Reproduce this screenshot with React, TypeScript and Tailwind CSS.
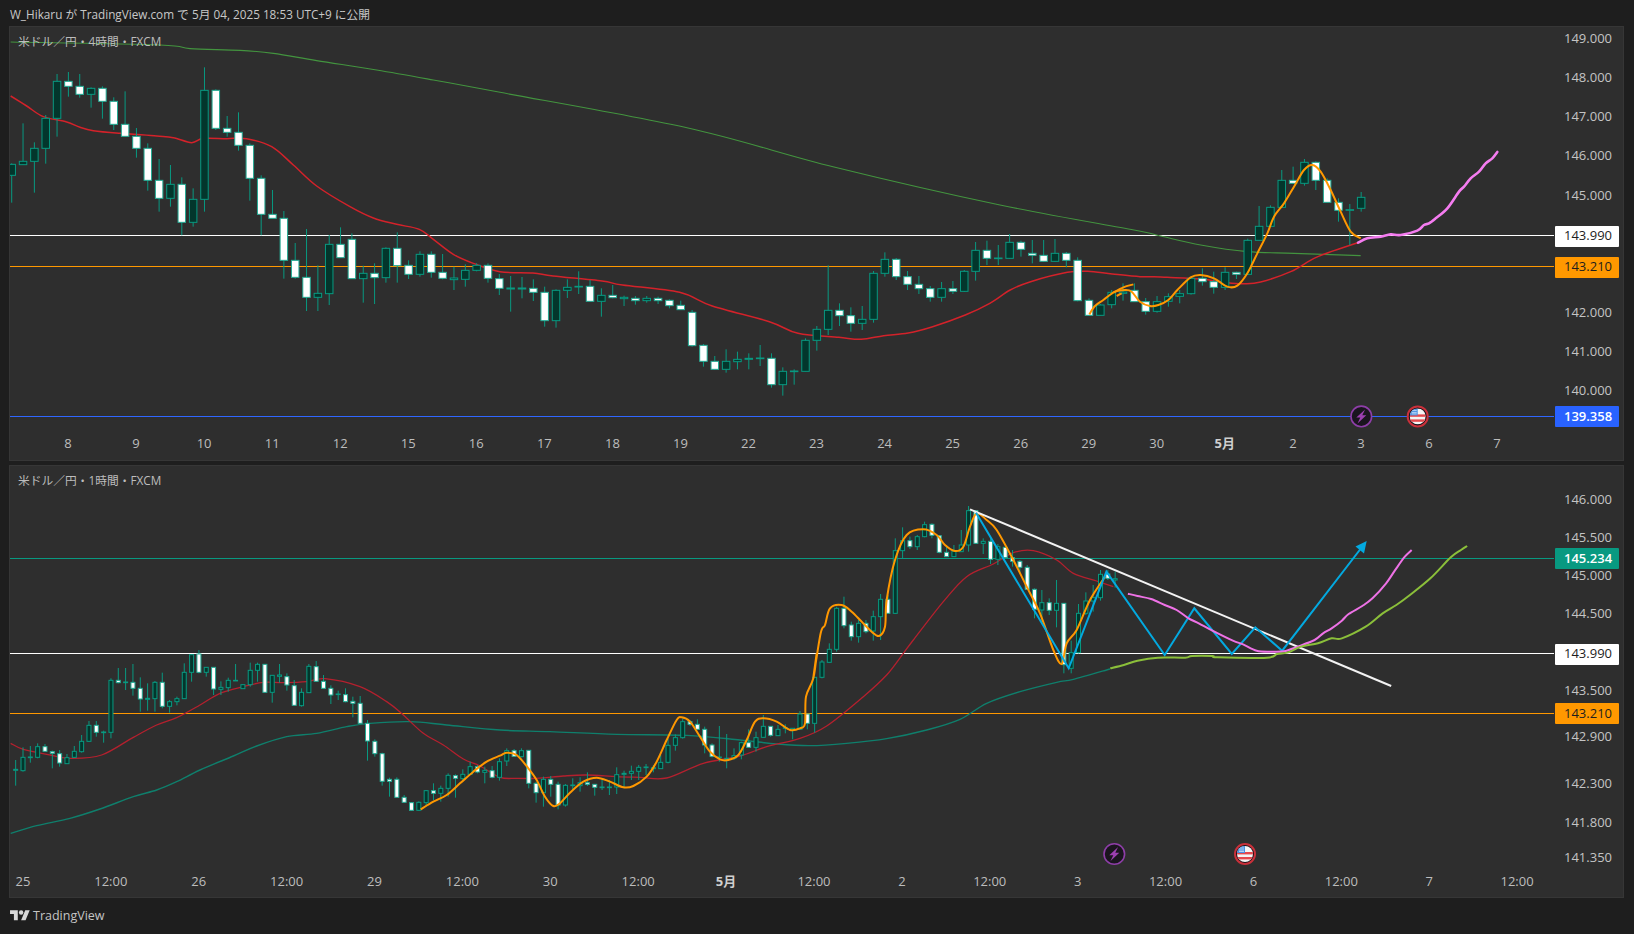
import React from 'react';

type Pt = number[];
type Candle = [number, number, number, number, number]; // wick top, body top, body bottom, wick bottom, 1 = white

const z = (pts: Pt[], ox: number, oy: number, sx = 3, sy = 3): Pt[] => pts.map(([x, y]) => [ox + x / sx, oy + y / sy]);

// catmull-rom through the read points
const smooth = (pts: Pt[]) => {
  let d = `M${pts[0][0]} ${pts[0][1]}`;
  for (let i = 0; i < pts.length - 1; i++) {
    const p0 = pts[i - 1] || pts[i];
    const p1 = pts[i];
    const p2 = pts[i + 1];
    const p3 = pts[i + 2] || p2;
    const c1x = p1[0] + (p2[0] - p0[0]) / 6;
    const c1y = p1[1] + (p2[1] - p0[1]) / 6;
    const c2x = p2[0] - (p3[0] - p1[0]) / 6;
    const c2y = p2[1] - (p3[1] - p1[1]) / 6;
    d += ` C${c1x} ${c1y} ${c2x} ${c2y} ${p2[0]} ${p2[1]}`;
  }
  return d;
};

const candles4hA: Candle[] = [
  [490,493,526,608,0],[370,484,494,494,0],[427,445,484,578,0],[345,355,445,491,0],[222,244,355,410,0],[216,244,259,290,1],[222,259,283,293,1],[262,265,283,323,0],[259,265,304,356,1],[292,304,373,390,1],
  [274,373,409,409,1],[384,409,445,473,1],[430,445,541,572,1],[477,541,595,635,1],[495,553,595,620,0],[532,553,667,706,1],[565,598,667,680,0],[202,271,598,635,0],[268,271,385,390,1],[348,385,397,410,1],
  [337,397,436,452,1],[430,436,535,602,1],[526,535,643,706,1],[570,643,655,655,1],[633,655,781,836,1],[729,781,832,836,1],[687,832,892,933,1],[796,880,892,933,0],[705,733,881,915,0],[682,733,773,773,1],
  [700,718,836,836,1],[797,820,836,908,0],[790,820,833,912,1],[742,745,833,848,0],[697,745,797,848,1],[781,796,823,837,1],[754,763,823,830,0],[754,763,817,833,1],[762,817,835,838,1],[800,834,839,870,0],
  [793,811,838,860,0],[790,796,811,814,0],[790,796,835,848,1],[822,836,865,885,1],
];
const candles4hB: Candle[] = [
  [138,174,177,245,0],[141,174,177,205,0],[148,175,187,213,1],[170,187,272,290,1],[178,181,272,293,0],[148,172,181,204,0],[124,169,171,192,0],[150,169,214,215,1],[175,196,214,260,0],[165,196,203,205,1],
  [197,202,206,228,0],[198,205,212,224,1],[198,205,212,218,0],[200,205,212,222,1],[208,211,227,235,1],[212,226,239,240,1],[240,247,347,350,1],[342,346,394,410,1],[378,394,418,420,1],[358,394,418,428,0],
  [365,388,395,418,0],[370,385,388,418,0],[345,384,386,408,0],[370,385,464,473,1],[412,424,464,497,0],[418,423,425,464,0],[325,331,424,424,0],[288,298,331,362,0],[106,241,298,315,0],[220,241,257,288,1],
  [232,257,280,305,1],[228,268,280,300,0],[123,130,268,278,0],[67,88,130,140,0],[84,88,140,150,1],[123,140,163,180,1],[138,163,176,192,1],[168,176,202,215,1],[156,176,202,215,0],[153,176,184,192,1],
  [120,124,184,186,0],[36,61,124,152,0],[32,61,85,105,1],[45,84,86,105,0],[12,37,85,86,0],[32,37,58,80,1],[30,70,76,100,1],[30,76,94,95,1],[27,70,94,96,0],[66,70,91,112,1],
  [82,91,212,214,1],[205,211,256,256,1],[222,225,256,256,0],[180,187,224,235,0],[160,186,190,212,0],
];
const candles4hC: Candle[] = [
  [460,481,515,515,1],[504,515,544,554,1],[498,515,544,548,0],[490,500,514,530,0],[480,491,499,520,0],[440,445,491,494,0],[415,445,455,467,1],[425,455,472,491,1],[412,427,472,480,0],[425,427,433,447,1],
  [326,331,433,435,0],[228,289,331,331,0],[226,232,289,290,0],[120,151,232,233,0],[110,151,160,160,1],[87,97,160,167,0],[94,97,151,180,1],[145,151,217,217,1],[205,217,241,275,1],[222,239,241,345,0],[186,202,235,245,0],
];

const candles1hA: Candle[] = [
  [360,388,391,437,0],[322,352,392,395,0],[318,351,353,368,0],[310,320,352,355,0],[312,320,334,334,1],[332,335,340,385,1],[330,341,369,380,1],[342,353,371,371,0],[318,334,352,353,0],[285,304,335,338,0],
  [243,256,304,305,0],[243,256,277,290,1],[272,276,278,308,0],[115,121,277,295,0],[84,121,128,130,1],[84,126,128,150,0],[72,127,145,167,1],[112,145,177,215,1],[130,175,178,212,0],[123,127,176,215,0],
  [98,127,199,205,1],[180,185,199,218,0],[170,176,185,196,0],[70,97,176,177,0],[42,44,97,125,0],[30,42,97,100,1],[82,82,97,110,0],[82,82,147,165,1],[124,142,148,165,0],[113,121,143,155,0],
  [72,121,122,123,0],[133,134,146,146,0],[68,91,134,140,0],[68,73,91,125,0],[73,73,157,157,1],[105,106,157,188,0],[72,105,109,128,0],[100,110,135,152,1],[120,137,196,196,1],[145,157,197,200,0],
  [72,79,158,158,0],[63,80,124,124,1],[105,124,145,145,1],[136,145,165,192,1],[152,162,163,180,0],[145,164,185,187,1],[170,184,190,232,1],[168,190,250,250,1],[240,250,303,362,1],[298,304,341,350,1],
  [338,341,424,437,1],[413,418,424,470,1],[412,418,472,472,1],[465,472,487,489,1],[487,488,511,512,1],[484,487,511,512,0],[450,452,488,500,0],[430,452,460,480,1],[437,445,460,485,0],[400,406,445,470,0],
  [403,407,415,473,1],[388,403,416,420,0],[365,380,403,405,0],[375,380,396,400,1],[380,391,397,430,0],[378,392,412,415,1],[355,365,412,422,0],
  [325,332,363,378,0],[327,332,349,350,1],[325,332,350,352,0],[330,331,430,445,1],[425,430,458,488,1],[410,418,458,500,0],[408,418,433,470,1],[425,433,495,508,1],[432,436,495,500,0],[415,435,437,450,0],
  [412,428,437,455,0],[397,428,433,438,1],[433,433,442,467,1],[415,441,443,450,0],[420,441,443,465,0],[382,404,441,462,0],[392,400,403,445,0],[377,394,400,420,0],[375,382,394,420,0],[372,381,383,405,0],
  [375,383,386,397,0],[345,367,386,386,0],[295,316,367,370,0],[283,293,316,332,0],[236,245,293,296,0],[240,245,253,258,1],[238,253,268,268,1],[260,268,315,340,1],[310,315,349,352,1],[258,351,353,365,0],
  [282,355,358,385,0],[325,347,355,360,0],[305,308,345,358,0],[268,308,322,322,1],[275,293,322,335,0],[225,259,292,292,0],[258,259,286,290,1],[255,268,287,288,0],[253,263,265,280,0],[265,265,270,298,0],
  [213,222,268,268,0],[222,222,250,268,1],[112,112,250,278,0],[60,66,112,115,0],[10,28,67,68,0],
];
const candles1hB: Candle[] = [
  [350,355,478,485,0],[320,355,407,415,1],[395,405,440,452,1],[390,400,440,458,0],[390,400,425,430,1],[362,380,423,452,0],[312,328,380,450,0],[315,328,370,372,1],[145,182,370,372,0],[112,152,182,205,0],
  [140,152,170,177,1],[135,140,170,180,0],[95,104,140,142,0],[100,103,136,145,1],[135,137,187,190,1],[165,187,200,200,1],[165,183,200,200,0],[120,165,185,185,0],[48,62,165,185,0],[62,62,160,162,1],
  [145,154,160,192,0],[145,154,208,222,1],[162,170,208,225,0],[172,172,203,205,1],[180,203,214,230,1],[210,214,232,250,1],[225,232,298,300,1],[295,298,358,385,1],[300,338,360,400,0],[325,338,361,375,1],
  [270,340,361,412,0],[340,340,524,550,1],[452,488,535,550,0],[342,370,488,490,0],[307,333,370,375,0],[285,323,333,365,0],[240,253,323,332,0],[240,252,265,270,1],[245,266,270,293,0],
];

const seq = (list: Candle[], oy: number, start: number) => list.map((c, i) => ({ idx: start + i, c: c.map((v, k) => (k < 4 ? oy + v / 3 : v)) }));

const chart4hCandles = [
  ...seq(candles4hA, 0, 0),
  ...seq(candles4hB, 230, 44),
  ...seq(candles4hC, 130, 99),
];
const chart1hCandles = [
  ...seq(candles1hA, 640, 0),
  ...seq(candles1hB, 490, 112),
];

const green4h = [...z([[32,126],[480,135],[570,146],[720,151],[820,160],[950,182],[1130,210],[1300,240],[1500,277]], 0, 0), [688,128], [834,167], [1000,205], ...z([[0,300],[80,318],[200,345],[340,365],[480,370],[680,377]], 1134, 130)];
const red4h = [
  ...z([[32,288],[80,318],[130,350],[200,366],[240,382],[280,392],[360,400],[470,408],[520,413],[575,428],[610,415],[680,416],[740,416],[815,440],[880,495],[950,558],[1050,620],[1120,654],[1190,673],[1258,688],[1300,718],[1360,763],[1420,790]], 0, 0),
  ...z([[0,125],[80,129],[130,138],[250,153],[300,165],[440,187],[520,228],[660,275],[730,310],[830,322],[885,328],[940,317],[1000,309],[1060,290],[1140,255],[1200,220],[1250,180],[1300,155],[1390,127],[1440,124],[1500,132],[1568,140]], 500, 230, 2.45, 3),
  ...z([[60,440],[100,442],[200,447],[280,458],[330,461],[380,456],[470,425],[540,385],[600,362],[680,335]], 1134, 130),
];
const orange4h = [
  ...z([[58,133],[75,108],[100,90],[135,65],[165,60],[185,65],[210,95],[240,108],[265,105],[295,90]], 1070, 270),
  ...z([[130,480],[170,442],[200,435],[240,445],[280,470],[310,467],[340,430],[370,370],[400,310],[420,260],[450,220],[480,170],[510,120],[535,105],[560,125],[590,180],[620,245],[650,305],[680,325]], 1134, 130),
];
const orange4hExtra = z([[130,68],[160,52],[190,43]], 1070, 270);
const orange4hDash = z([[140,78],[155,70]], 1070, 270);
const pink4h = z([[672,338],[700,325],[740,320],[770,313],[800,315],[850,302],[870,285],[885,280],[905,265],[940,235],[975,185],[990,170],[1010,145],[1035,125],[1055,100],[1075,85],[1090,66]], 1134, 130);

const red1h = [
  ...z([[32,310],[70,328],[150,345],[215,355],[305,345],[400,292],[470,255],[530,233],[600,195],[660,160],[730,140],[790,127],[850,128],[920,125],[975,116],[1080,140],[1160,185],[1210,225],[1270,280],[1330,315],[1390,357],[1440,378],[1500,412]], 0, 640),
  ...z([[50,415],[110,415],[190,408],[260,405],[350,410],[420,412],[500,414],[610,370],[720,348],[800,320],[900,295],[980,258],[1090,170],[1160,105],[1210,40],[1240,0]], 500, 640),
  ...z([[490,335],[560,260],[640,222],[700,188],[760,182],[830,210],[880,250],[950,273],[1000,290]], 780, 490),
];
const teal1h = [
  ...z([[32,580],[110,557],[210,535],[300,507],[400,470],[470,450],[530,425],[600,390],[700,348],[770,318],[860,290],[950,280],[1040,260],[1110,250],[1230,245],[1340,255],[1500,270]], 0, 640),
  ...z([[150,275],[350,283],[560,286],[720,300],[830,312],[930,317],[1040,310],[1160,296],[1280,270],[1380,238]], 500, 640),
  ...z([[620,640],[720,605],[830,577],[880,568],[990,537]], 780, 490),
];
const orange1h = [
  ...z([[1262,508],[1300,485],[1340,465],[1380,430],[1420,395],[1460,365],[1500,347]], 0, 640),
  ...z([[20,338],[50,345],[85,385],[110,420],[135,470],[160,498],[180,490],[210,458],[250,425],[290,413],[330,425],[370,442],[400,438],[440,410],[470,365],[500,300],[530,240],[545,232],[570,245],[600,290],[630,335],[660,358],[685,360],[715,345],[740,300],[765,245],[790,235],[830,245],[870,270],[900,265],[915,250],[918,170],[940,115],[950,40]], 500, 640),
  ...z([[100,565],[122,430],[135,405],[150,355],[185,345],[215,365],[245,395],[275,425],[297,438],[315,410],[320,330],[345,210],[380,135],[430,118],[470,135],[495,165],[525,183],[550,170],[570,110],[590,70],[620,90],[650,120],[700,210],[740,290],[780,370],[820,480],[845,522],[860,460],[890,420],[930,330],[975,260]], 780, 490),
];
const pink1h = z([[82,281],[110,288],[150,297],[190,315],[225,330],[260,355],[290,370],[330,392],[390,422],[420,433],[460,452],[500,455],[540,454],[580,440],[630,420],[655,400],[680,385],[710,362],[730,342],[770,318],[800,295],[840,250],[870,205],[895,170],[915,150]], 1100, 500, 2.936, 3);
const lime1h = z([[30,505],[70,495],[110,482],[170,473],[250,473],[270,468],[330,468],[345,472],[490,473],[520,462],[550,458],[590,440],[640,430],[680,415],[710,415],[780,380],[830,340],[870,315],[910,285],[970,235],[1030,172],[1060,150],[1078,138]], 1100, 500, 2.936, 3);
const zigzag1h = '976,512.7 1068.7,668.3 1106.4,571.7 1164.7,655 1194.3,608.3 1231.8,654 1255.3,627.3 1282.2,650.7 1362,547';

const BoltPin = ({ x, y }: { x: number; y: number }) => (
  <g transform={`translate(${x} ${y})`}>
    <circle r="10.3" fill="#1a151e" stroke="#8e3ea8" strokeWidth="1.6" />
    <path d="M3.8 -7 L-5 1.2 L-1 1.2 L-3.8 7 L5 -1.2 L1 -1.2 Z" fill="#9c3fb0" />
  </g>
);

const FlagPin = ({ x, y, id }: { x: number; y: number; id: string }) => (
  <g transform={`translate(${x} ${y})`}>
    <clipPath id={id}><circle r="8" /></clipPath>
    <circle r="10" fill="#17131b" stroke="#c9303a" strokeWidth="2" />
    <g clipPath={`url(#${id})`}>
      <rect x="-8" y="-8" width="16" height="16" fill="#f4f4f4" />
      <rect x="-8" y="-2" width="16" height="2.4" fill="#e5484d" />
      <rect x="-8" y="3" width="16" height="2.4" fill="#e5484d" />
      <rect x="-8" y="-8" width="8" height="7" fill="#4a90e2" />
      <path d="M-6-6h5M-6-4h5M-6-2.5h5" stroke="#cfe2f8" strokeWidth="0.8" />
    </g>
  </g>
);

type Level = { y: number; label: string; bg?: string; fg?: string; bold?: boolean };

const Candles = ({ list, x0, step, w }: { list: { idx: number; c: number[] }[]; x0: number; step: number; w: number }) => (
  <g>
    {list.map(({ idx, c }) => {
      const x = x0 + idx * step;
      const white = c[4] === 1;
      return (
        <g key={idx}>
          <line x1={x} x2={x} y1={c[0]} y2={c[3]} stroke="#089981" strokeWidth="1" />
          <rect x={x - w / 2} y={c[1]} width={w} height={Math.max(c[2] - c[1], 0.6)} fill={white ? '#ffffff' : '#03362c'} stroke={white ? '#22ab94' : '#089981'} strokeWidth="1" />
        </g>
      );
    })}
  </g>
);

const Panel = ({ title, heightClass, axisClass, top, plotHeight, levels, ticks, tickClass, children }: {
  title: string; heightClass: string; axisClass: string; top: number; plotHeight: number; levels: Level[]; ticks: string[]; tickClass: string; children: React.ReactNode;
}) => (
  <section className={`flex flex-col bg-[#2e2e2e] border border-[#363636] overflow-hidden ${heightClass}`}>
    <div className="flex" style={{ height: plotHeight }}>
      <div className="relative w-[1544px] overflow-hidden">
        <svg width="1544" height={plotHeight} viewBox={`10 ${top} 1544 ${plotHeight}`} className="block">
          {children}
        </svg>
        <div className="absolute left-[8px] top-[6px] text-[11.75px] leading-4 text-[#bdbdbd]">{title}</div>
      </div>
      <div className="relative flex-1">
        {levels.map(l => (
          <div
            key={l.label}
            className={`absolute left-[1px] w-[64px] h-[21px] pl-[9px] flex items-center rounded-[1px] text-[13px] ${l.bold ? 'font-semibold' : ''}`}
            style={{ top: l.y - top - 10.5, background: l.bg, color: l.fg || '#c4c4c4' }}
          >
            {l.label}
          </div>
        ))}
      </div>
    </div>
    <div className={`flex flex-1 items-center text-[13px] text-[#bdbdbd] ${axisClass}`}>
      {ticks.map((t, i) => (
        <span key={i} className={`${tickClass} shrink-0 text-center ${t === '5月' ? 'font-bold text-[#cfcfcf]' : ''}`}>{t}</span>
      ))}
    </div>
  </section>
);

const levels4h: Level[] = [
  { y: 39, label: '149.000' }, { y: 78, label: '148.000' }, { y: 117, label: '147.000' }, { y: 156, label: '146.000' }, { y: 196, label: '145.000' },
  { y: 274, label: '143.000' }, { y: 313, label: '142.000' }, { y: 352, label: '141.000' }, { y: 391, label: '140.000' },
  { y: 236, label: '143.990', bg: '#ffffff', fg: '#1e1e1e' },
  { y: 267, label: '143.210', bg: '#ff9800', fg: '#1e1e1e' },
  { y: 416.5, label: '139.358', bg: '#2962ff', fg: '#ffffff', bold: true },
];

const levels1h: Level[] = [
  { y: 500, label: '146.000' }, { y: 538, label: '145.500' }, { y: 576, label: '145.000' }, { y: 614, label: '144.500' }, { y: 691, label: '143.500' },
  { y: 737, label: '142.900' }, { y: 784, label: '142.300' }, { y: 823, label: '141.800' }, { y: 858, label: '141.350' },
  { y: 558.5, label: '145.234', bg: '#089981', fg: '#ffffff', bold: true },
  { y: 654, label: '143.990', bg: '#ffffff', fg: '#1e1e1e' },
  { y: 713.5, label: '143.210', bg: '#ff9800', fg: '#1e1e1e' },
];

const App: React.FC = () => {
  return (
    <div className="h-[934px] w-[1634px] overflow-hidden bg-[#1e1e1e] text-[#c4c4c4]" style={{ fontFamily: '"Open Sans", "Noto Sans CJK JP", sans-serif' }}>
      <header className="h-[26px] pl-[10px] pt-[3px] flex items-center text-[11.75px] text-[#c8c8c8]">
        W_Hikaru が TradingView.com で 5月 04, 2025 18:53 UTC+9 に公開
      </header>
      <main className="ml-[9px] mr-[10px] flex flex-col gap-[4px]">
        <Panel
          title="米ドル／円・4時間・FXCM"
          heightClass="h-[435px]"
          axisClass="pl-[24px]"
          top={27}
          plotHeight={401}
          levels={levels4h}
          ticks={['8','9','10','11','12','15','16','17','18','19','22','23','24','25','26','29','30','5月','2','3','6','7']}
          tickClass="w-[68.05px]"
        >
          <line x1="10" x2="1554" y1="235.5" y2="235.5" stroke="#ffffff" strokeWidth="1" />
          <line x1="10" x2="1554" y1="266.5" y2="266.5" stroke="#ff9800" strokeWidth="1" />
          <line x1="10" x2="1554" y1="416.5" y2="416.5" stroke="#2f66ff" strokeWidth="1" />
          <path d={smooth(green4h)} fill="none" stroke="#43943f" strokeWidth="1.1" />
          <path d={smooth(red4h)} fill="none" stroke="#d3222a" strokeWidth="1.5" />
          <Candles list={chart4hCandles} x0={11.7} step={11.34} w={7.5} />
          <path d={smooth(orange4h)} fill="none" stroke="#ff9800" strokeWidth="2" />
          <path d={smooth(orange4hExtra)} fill="none" stroke="#ff9800" strokeWidth="2" />
          <path d={smooth(orange4hDash)} fill="none" stroke="#ff9800" strokeWidth="2" />
          <path d={smooth(pink4h)} fill="none" stroke="#f57cf0" strokeWidth="2.6" strokeLinecap="round" />
          <BoltPin x={1361.3} y={416.4} />
          <FlagPin x={1417.7} y={416.4} id="us4h" />
        </Panel>
        <Panel
          title="米ドル／円・1時間・FXCM"
          heightClass="h-[433px]"
          axisClass="-ml-[31px]"
          top={466}
          plotHeight={400}
          levels={levels1h}
          ticks={['25','12:00','26','12:00','29','12:00','30','12:00','5月','12:00','2','12:00','3','12:00','6','12:00','7','12:00']}
          tickClass="w-[87.9px]"
        >
          <line x1="10" x2="1554" y1="558.5" y2="558.5" stroke="#089981" strokeWidth="1" />
          <line x1="10" x2="1554" y1="653.5" y2="653.5" stroke="#ffffff" strokeWidth="1" />
          <line x1="10" x2="1554" y1="713.5" y2="713.5" stroke="#ff9800" strokeWidth="1" />
          <path d={smooth(teal1h)} fill="none" stroke="#0f7f6c" strokeWidth="1.4" />
          <path d={smooth(red1h)} fill="none" stroke="#b4202e" strokeWidth="1.3" />
          <Candles list={chart1hCandles} x0={15.67} step={7.33} w={4} />
          <path d={smooth(orange1h)} fill="none" stroke="#ff9800" strokeWidth="2" />
          <line x1="970" y1="509.3" x2="1391.2" y2="686" stroke="#f2f2f2" strokeWidth="2" />
          <polyline points={zigzag1h} fill="none" stroke="#03a9e0" strokeWidth="2" />
          <polygon points="1366.7,541 1355.5,546.5 1364,553.5" fill="#03a9e0" />
          <path d={smooth(pink1h)} fill="none" stroke="#ee72e6" strokeWidth="2" />
          <path d={smooth(lime1h)} fill="none" stroke="#8bbf3a" strokeWidth="2" />
          <BoltPin x={1114.3} y={854} />
          <FlagPin x={1245} y={854} id="us1h" />
        </Panel>
      </main>
      <footer className="h-[36px] pl-[10px] flex items-center gap-[3px]">
        <svg width="20" height="15.5" viewBox="0 0 36 28" fill="#d8d8d8">
          <path d="M14 22H7V11H0V4h14v18zM28 22h-8l7.5-18h8L28 22z" />
          <circle cx="20" cy="8" r="4" />
        </svg>
        <span className="text-[12.5px] text-[#c4c4c4]">TradingView</span>
      </footer>
    </div>
  );
};

export default App;
